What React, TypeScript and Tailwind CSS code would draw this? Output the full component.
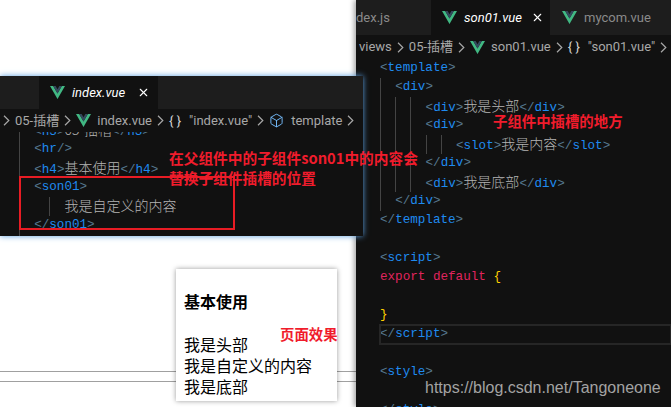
import type { ReactNode } from "react";
import { X, Box } from "lucide-react";

const MONO = "font-['Liberation_Mono','Noto_Sans_CJK_SC',monospace]";
const UI = "font-['Roboto','Noto_Sans_CJK_SC',sans-serif]";
const CJK = "font-['Noto_Sans_CJK_SC',sans-serif]";

function VueIcon({ size = 15 }: { size?: number }) {
  return (
    <svg width={size} height={size} viewBox="0 0 16 14" className="shrink-0">
      <path d="M0 0 L8 14 L16 0 L12.6 0 L8 8 L3.4 0 Z" fill="#41b883" />
      <path d="M3.4 0 L8 8 L12.6 0 L10 0 L8 3.4 L6 0 Z" fill="#34495e" />
    </svg>
  );
}

function Tag({ children }: { children: string }) {
  const m = children.match(/^(<\/?)([\w]+)(\/?>)$/);
  if (!m) return <span>{children}</span>;
  return (
    <>
      <span className="text-[#56788f]">{m[1]}</span>
      <span className="text-[#1f8bf0]">{m[2]}</span>
      <span className="text-[#56788f]">{m[3]}</span>
    </>
  );
}

function Zh({ children }: { children: string }) {
  return <span className={`${CJK} text-[14px] font-light`}>{children}</span>;
}

function Line({ guides = [], children, active }: { guides?: boolean[]; children?: ReactNode; active?: boolean }) {
  return (
    <div className={`flex h-[19px] items-center whitespace-pre ${active ? "outline outline-2 -outline-offset-1 outline-[#262626]" : ""}`}>
      {guides.map((g, i) => (
        <span key={i} className={`h-full w-[15.2px] shrink-0 ${g ? "border-l border-[#444444]" : ""}`} />
      ))}
      <span className="text-[#b4b4b4]">{children}</span>
    </div>
  );
}

function Chev() {
  return (
    <svg width="7" height="11" viewBox="0 0 7 11" className="shrink-0">
      <path d="M1 0.8 L5.8 5.5 L1 10.2" fill="none" stroke="#a8a8a8" strokeWidth="1.2" />
    </svg>
  );
}

function Crumbs({ file }: { file: string }) {
  return (
    <>
      <span>05-插槽</span>
      <Chev />
      <span className="flex items-center gap-[6px]">
        <VueIcon />
        <span>{file}</span>
      </span>
      <Chev />
      <span className="text-[#d0d0d0]">{"{ }"}</span>
      <span className="ml-[3px]">"{file}"</span>
      <Chev />
    </>
  );
}

const G3 = [true, true, true];
const G5 = [true, true, true, true, true];

export default function App() {
  return (
    <div className="relative h-[407px] w-[671px] overflow-hidden bg-white">
      {/* browser page behind the editors */}
      <div className="absolute left-0 top-[371px] h-[11px] w-[356px] border-y border-[#a0a0a0]" />
      <div className="absolute left-[176px] top-[269px] h-[132px] w-[161px] bg-white pl-[8px] pt-[22px] text-[16px] leading-[21px] text-black shadow-[0_0_5px_rgba(0,0,0,0.4)]">
        <div className={`${CJK} font-bold`}>基本使用</div>
        <div className={`${CJK} mt-[22px]`}>我是头部</div>
        <div className={CJK}>我是自定义的内容</div>
        <div className={CJK}>我是底部</div>
      </div>
      <div className={`${CJK} absolute left-[280px] top-[323px] text-[14.4px] font-bold leading-[21px] text-[#f01c2c]`}>页面效果</div>

      {/* son01.vue editor */}
      <div className="absolute left-[356px] top-0 flex h-[407px] w-[315px] flex-col bg-[#111111] shadow-[-2px_0_5px_rgba(0,0,0,0.35)]">
        <div className={`${UI} flex h-[35px] shrink-0 items-center bg-[#1d1d1d] text-[13px]`}>
          <div className="flex h-full w-[75px] items-center text-[#8a8a8a]">dex.js</div>
          <div className="flex h-full w-[119px] items-center gap-[7px] bg-[#111111] pl-[11px]">
            <VueIcon />
            <span className="italic text-white">son01.vue</span>
            <X size={13} strokeWidth={2} className="ml-[2px] text-white" />
          </div>
          <div className="flex h-full items-center gap-[7px] pl-[12px] text-[#8a8a8a]">
            <VueIcon />
            <span>mycom.vue</span>
          </div>
        </div>
        <div className={`${UI} flex h-[24px] shrink-0 items-center gap-[5px] whitespace-pre pl-[3px] text-[13px] text-[#a8a8a8]`}>
          <span>views</span>
          <Chev />
          <Crumbs file="son01.vue" />
          <span className="text-[#1f8bf0]">&lt;</span>
        </div>
        <div className={`${MONO} min-h-0 flex-1 overflow-hidden pl-[24px] text-[12.6px]`}>
          <Line><Tag>{"<template>"}</Tag></Line>
          <Line guides={[true]}><Tag>{"<div>"}</Tag></Line>
          <Line guides={G3}><Tag>{"<div>"}</Tag><Zh>我是头部</Zh><Tag>{"</div>"}</Tag></Line>
          <Line guides={G3}><Tag>{"<div>"}</Tag></Line>
          <Line guides={G5}><Tag>{"<slot>"}</Tag><Zh>我是内容</Zh><Tag>{"</slot>"}</Tag></Line>
          <Line guides={G3}><Tag>{"</div>"}</Tag></Line>
          <Line guides={G3}><Tag>{"<div>"}</Tag><Zh>我是底部</Zh><Tag>{"</div>"}</Tag></Line>
          <Line guides={[true]}><Tag>{"</div>"}</Tag></Line>
          <Line><Tag>{"</template>"}</Tag></Line>
          <Line />
          <Line><Tag>{"<script>"}</Tag></Line>
          <Line>
            <span className="text-[#e0245e]">export default </span>
            <span className="text-[#ffd000]">{"{"}</span>
          </Line>
          <Line />
          <Line><span className="text-[#ffd000]">{"}"}</span></Line>
          <Line active><Tag>{"</script>"}</Tag></Line>
          <Line />
          <Line><Tag>{"<style>"}</Tag></Line>
          <Line />
          <Line><Tag>{"</style>"}</Tag></Line>
        </div>
      </div>
      <div className="absolute left-[425px] top-[378px] font-['Liberation_Sans',sans-serif] text-[16px] leading-[20px] text-[#a3a3a3]">
        https://blog.csdn.net/Tangoneone
      </div>

      {/* index.vue editor */}
      <div className="absolute left-0 top-[76px] flex h-[160px] w-[363px] flex-col overflow-hidden bg-[#111111] shadow-[0_0_6px_#5a9fe0]">
        <div className={`${UI} flex h-[33px] shrink-0 bg-[#1d1d1d] text-[13px]`}>
          <div className="ml-[39px] flex h-full w-[119px] items-center gap-[7px] bg-[#111111] pl-[11px]">
            <VueIcon />
            <span className="italic text-white">index.vue</span>
            <X size={13} strokeWidth={2} className="ml-[5px] text-white" />
          </div>
        </div>
        <div className={`${UI} flex h-[23px] shrink-0 items-center gap-[5px] whitespace-pre pl-[3px] text-[13px] text-[#a8a8a8]`}>
          <Chev />
          <Crumbs file="index.vue" />
          <Box size={15} strokeWidth={1.5} className="shrink-0 text-[#75beff]" />
          <span className="ml-[2px]">template</span>
          <Chev />
          <span className="ml-[4px] text-[#1f8bf0]">&lt;</span>
        </div>
        <div className={`${MONO} min-h-0 flex-1 overflow-hidden pl-[19px] text-[12.6px]`}>
          <div className="-mt-[11px]">
            <Line guides={[true]}><Tag>{"<h3>"}</Tag><Zh>05-插槽</Zh><Tag>{"</h3>"}</Tag></Line>
            <Line guides={[true]}><Tag>{"<hr/>"}</Tag></Line>
            <Line guides={[true]}><Tag>{"<h4>"}</Tag><Zh>基本使用</Zh><Tag>{"</h4>"}</Tag></Line>
            <Line guides={[true]}><Tag>{"<son01>"}</Tag></Line>
            <Line guides={[true, false, true]}><Zh>我是自定义的内容</Zh></Line>
            <Line guides={[true]}><Tag>{"</son01>"}</Tag></Line>
            <Line guides={[true]} />
          </div>
        </div>
      </div>

      {/* red annotations on top */}
      <div className="absolute left-[19px] top-[176px] h-[54px] w-[216px] border-2 border-[#e81c24]" />
      <div className={`${CJK} absolute left-[169px] top-[148px] whitespace-pre text-[14.7px] font-bold leading-[20px] text-[#f01c2c]`}>
        在父组件中的子组件son01中的内容会{"\n"}替换子组件插槽的位置
      </div>
      <div className={`${CJK} absolute left-[493px] top-[111px] text-[14.4px] font-bold leading-[20px] text-[#f01c2c]`}>
        子组件中插槽的地方
      </div>
    </div>
  );
}
